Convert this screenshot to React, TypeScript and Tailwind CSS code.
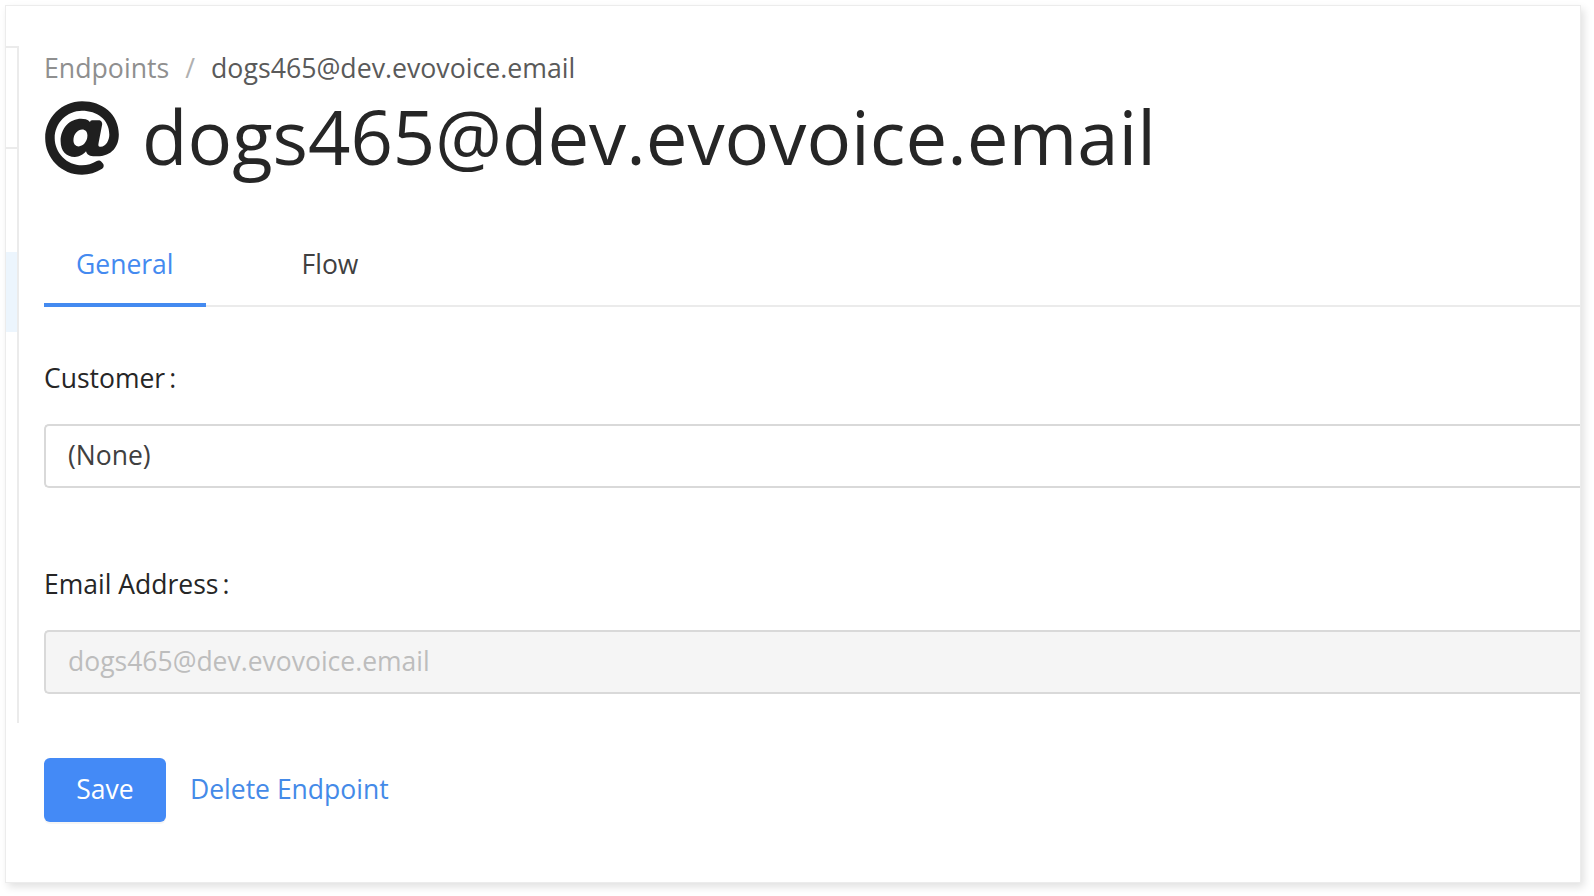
import React from "react";
import { FaAt } from "react-icons/fa";

export default function App() {
  return (
    <div
      className="w-[1594px] h-[896px] bg-white pl-[5px] pt-[5px] overflow-hidden"
      style={{ fontFamily: '"Open Sans", "Noto Sans", sans-serif' }}
    >
      <div className="w-[1576px] h-[878px] bg-white border border-[#ececec] shadow-[3px_4px_8px_rgba(0,0,0,0.12)] flex flex-col pt-[40px]">
        <div className="flex">
          {/* sidebar strip */}
          <div className="w-[13px] h-[677px] border-r-2 border-[#ebebeb] flex flex-col">
            <div className="h-[101px] border-t-2 border-[#ebebeb]" />
            <div className="h-[105px] border-t-2 border-[#ebebeb]" />
            <div className="h-[80px] bg-[#ecf5fd]" />
          </div>
          {/* main content */}
          <div className="flex-1 pl-[25px] flex flex-col">
            <div className="flex items-center h-[44px] text-[26.7px] leading-[44px]">
              <span className="text-[#8f8f8f]">Endpoints</span>
              <span className="text-[#b0b0b0] mx-[16px]">/</span>
              <span className="text-[#5a5a5a]">dogs465@dev.evovoice.email</span>
            </div>
            <div className="flex items-center h-[94px]">
              <FaAt className="w-[76px] h-[76px] text-[#1f1f1f] mt-[2px]" />
              <h1 className="ml-[22px] text-[74.3px] leading-[94px] text-[#262626] font-normal">
                dogs465@dev.evovoice.email
              </h1>
            </div>
            <div className="mt-[30px] flex border-b-2 border-[#ebebeb] text-[26.5px] leading-[44px]">
              <div className="relative px-[32px] pt-[28px] pb-[19px] text-[#448af0]">
                General
                <div className="absolute left-0 right-0 bottom-[-2px] h-[4px] bg-[#448af0]" />
              </div>
              <div className="ml-[64px] px-[32px] pt-[28px] pb-[19px] text-[#404040]">
                Flow
              </div>
            </div>
            <div className="mt-[49px] h-[44px] text-[26.5px] leading-[44px] text-[#262626]">
              Customer<span className="ml-[4px]">:</span>
            </div>
            <div className="mt-[24px] h-[64px] border-2 border-r-0 border-[#d9d9d9] rounded-l-[5px] flex items-center pl-[22px] text-[26.5px] text-[#404040]">
              (None)
            </div>
            <div className="mt-[74px] h-[44px] text-[26.5px] leading-[44px] text-[#262626]">
              Email Address<span className="ml-[4px]">:</span>
            </div>
            <div className="mt-[24px] h-[64px] border-2 border-r-0 border-[#d9d9d9] rounded-l-[5px] bg-[#f5f5f5] flex items-center pl-[22px] text-[26.5px] text-[#bdbdbd]">
              dogs465@dev.evovoice.email
            </div>
          </div>
        </div>
        <div className="mt-[35px] pl-[38px] flex items-center">
          <button className="w-[122px] h-[64px] rounded-[6px] bg-[#448af6] text-white text-[26.5px] shadow-[0_2px_0_rgba(0,0,0,0.04)]">
            Save
          </button>
          <span className="ml-[24px] text-[26.5px] text-[#448ae8]">Delete Endpoint</span>
        </div>
      </div>
    </div>
  );
}
